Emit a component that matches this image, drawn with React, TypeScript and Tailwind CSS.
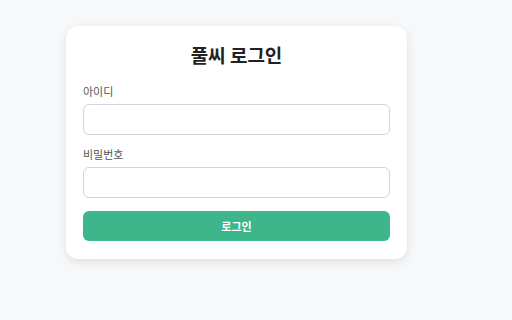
import React from 'react';

const LoginCard: React.FC = () => {
  return (
    <div className="w-[341px] bg-white rounded-[12px] shadow-[0_3px_10px_rgba(0,0,0,0.1)] px-[17px] pt-[15px] pb-[18px]">
      <h1 className="text-center text-[19px] leading-[28px] font-bold text-[#222]">풀씨 로그인</h1>

      <div className="mt-[14px]">
        <label className="block text-[11px] leading-[16px] text-[#555]">아이디</label>
        <input
          type="text"
          className="mt-[5px] block w-full h-[31px] rounded-[6px] border border-[#d1d5db] bg-white px-3 outline-none"
        />
      </div>

      <div className="mt-[11px]">
        <label className="block text-[11px] leading-[16px] text-[#555]">비밀번호</label>
        <input
          type="password"
          className="mt-[5px] block w-full h-[31px] rounded-[6px] border border-[#d1d5db] bg-white px-3 outline-none"
        />
      </div>

      <button className="mt-[13px] w-full h-[30px] rounded-[6px] bg-[#3db68c] text-white text-[11px] font-bold">
        로그인
      </button>
    </div>
  );
};

export default function App() {
  return (
    <div
      className="w-[512px] h-[320px] bg-[#f7f8fa] pl-[66px] pt-[26px]"
      style={{ fontFamily: '"Noto Sans CJK KR", "Noto Sans", sans-serif' }}
    >
      <LoginCard />
    </div>
  );
}
